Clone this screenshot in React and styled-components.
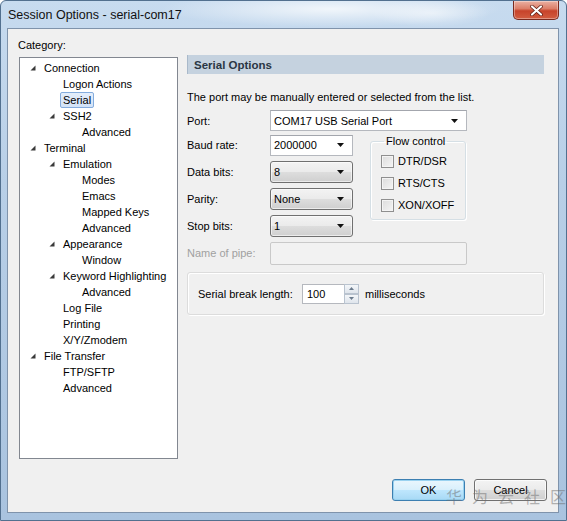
import React from "react";
import styled, { createGlobalStyle } from "styled-components";

const Global = createGlobalStyle`
  html, body { margin: 0; padding: 0; background: #ffffff; }
  body { font-family: "Liberation Sans", Arial, sans-serif; font-size: 11px; color: #000; }
  * { box-sizing: border-box; }
`;

const Window = styled.div`
  position: relative;
  width: 567px;
  height: 521px;
  display: flex;
  flex-direction: column;
  border: 1px solid #52708f;
  border-radius: 6px 6px 0 0;
  overflow: hidden;
  background:
    radial-gradient(ellipse 170px 18px at 330px 8px, rgba(255,255,255,0.75), rgba(255,255,255,0) 100%),
    radial-gradient(ellipse 60px 14px at 430px 12px, rgba(255,255,255,0.5), rgba(255,255,255,0) 100%),
    linear-gradient(to bottom, #c7dbef 0%, #b8cfe7 35%, #a9c3df 100%);
`;

const TitleBar = styled.div`
  height: 27px;
  display: flex;
  align-items: flex-start;
  justify-content: space-between;
  padding-left: 7px;
`;

const Title = styled.span`
  margin-top: 7px;
  font-family: "Liberation Sans", Arial, sans-serif;
  font-size: 12.5px;
  color: #111;
`;

const CloseButton = styled.div`
  width: 46px;
  height: 19px;
  margin-right: 7px;
  border: 1px solid #7a2a1e;
  border-top: none;
  border-radius: 0 0 5px 5px;
  background: linear-gradient(to bottom, #eab1a3 0%, #dc7f69 42%, #c7432a 55%, #d25d40 100%);
  box-shadow: inset 0 0 0 1px rgba(255,255,255,0.35);
  display: flex;
  align-items: center;
  justify-content: center;
`;

const Client = styled.div`
  flex: 1;
  margin: 0 7px 7px 6px;
  border: 1px solid #7f93ab;
  background: #f0f0f0;
  display: flex;
  flex-direction: column;
  padding: 9px 11px 11px 10px;
`;

const Body = styled.div`
  display: flex;
  gap: 9px;
`;

const LeftColumn = styled.div`
  width: 160px;
  display: flex;
  flex-direction: column;
`;

const CategoryLabel = styled.div`
  height: 14px;
  line-height: 14px;
  margin-bottom: 5px;
`;

const Tree = styled.div`
  margin-left: 1px;
  width: 159px;
  height: 402px;
  background: #fff;
  border: 1px solid #828790;
  padding-top: 2px;
  display: flex;
  flex-direction: column;
`;

const TreeRow = styled.div`
  height: 16px;
  display: flex;
  align-items: center;
  padding-left: ${(p) => p.$level * 19}px;
`;

const Toggle = styled.span`
  width: 24px;
  height: 16px;
  display: flex;
  align-items: center;
  padding-left: 10px;
  flex-shrink: 0;
`;

const TreeLabel = styled.span`
  margin-left: -3px;
  padding: 0 2px;
  height: 16px;
  line-height: 14px;
  border: 1px solid ${(p) => (p.$selected ? "#84acdd" : "transparent")};
  border-radius: 2px;
  background: ${(p) => (p.$selected ? "linear-gradient(to bottom, #e4eefb, #d3e3f7)" : "transparent")};
  white-space: nowrap;
`;

const RightColumn = styled.div`
  width: 357px;
  margin-top: 17px;
  display: flex;
  flex-direction: column;
`;

const Header = styled.div`
  height: 19px;
  background: #c5d2df;
  border-left: 1px solid #a9b9ca;
  padding-left: 6px;
  display: flex;
  align-items: center;
  font-size: 11.5px;
  font-weight: bold;
  color: #2a3644;
`;

const Description = styled.div`
  margin-top: 15px;
  height: 16px;
  line-height: 16px;
  margin-bottom: 5px;
`;

const FieldRow = styled.div`
  display: flex;
  align-items: center;
  height: ${(p) => p.$h || 22}px;
`;

const FieldLabel = styled.span`
  width: 83px;
  flex-shrink: 0;
  color: ${(p) => (p.$disabled ? "#a0a0a0" : "#000")};
`;

const EditCombo = styled.div`
  width: ${(p) => p.$w}px;
  height: 21px;
  background: #fff;
  border: 1px solid #b5b8be;
  border-top-color: #a3a6ad;
  display: flex;
  align-items: center;
  justify-content: space-between;
  padding: 0 8px 0 3px;
`;

const ButtonCombo = styled.div`
  width: ${(p) => p.$w}px;
  height: 22px;
  border: 1px solid #707070;
  border-radius: 3px;
  background: linear-gradient(to bottom, #f3f3f3 0%, #ebebeb 48%, #dddddd 52%, #cfcfcf 100%);
  box-shadow: inset 0 0 0 1px rgba(255,255,255,0.6);
  display: flex;
  align-items: center;
  justify-content: space-between;
  padding: 0 8px 0 3px;
`;

const Arrow = () => (
  <svg width="7" height="4" viewBox="0 0 7 4">
    <path d="M0 0 H7 L3.5 4 Z" fill="#111" />
  </svg>
);

const MiddleSection = styled.div`
  display: flex;
  margin-top: 3px;
  gap: 17px;
`;

const FieldStack = styled.div`
  display: flex;
  flex-direction: column;
  gap: 5px;
`;

const GroupBox = styled.fieldset`
  margin: 0;
  width: 96px;
  height: 86px;
  border: 1px solid #d5dfe5;
  border-radius: 3px;
  box-shadow: inset 1px 1px 0 #fff, 1px 1px 0 #fff;
  padding: 3px 0 0 10px;
  display: flex;
  flex-direction: column;
  gap: 2px;
`;

const Legend = styled.legend`
  padding: 0 2px;
  margin-left: 3px;
  line-height: 14px;
`;

const CheckRow = styled.label`
  display: flex;
  align-items: center;
  height: 20px;
  gap: 4px;
`;

const CheckBox = styled.span`
  width: 13px;
  height: 13px;
  border: 1px solid #8f8f8f;
  background: linear-gradient(135deg, #dcdcdc 0%, #f5f5f5 100%);
  box-shadow: inset 0 0 0 1px #f4f4f4;
`;

const DisabledInput = styled.div`
  width: 197px;
  height: 23px;
  border: 1px solid #c9c9c9;
  border-radius: 2px;
  background: #f2f2f2;
`;

const PipeRow = styled(FieldRow)`
  margin-top: 4px;
  height: 24px;
`;

const BreakBox = styled.div`
  margin-top: 7px;
  height: 43px;
  border: 1px solid #dcdcdc;
  border-radius: 3px;
  box-shadow: inset 1px 1px 0 #fff, 1px 1px 0 #fff;
  display: flex;
  align-items: center;
  padding-left: 10px;
`;

const BreakLabel = styled.span`
  width: 104px;
`;

const NumberInput = styled.div`
  width: 42px;
  height: 20px;
  background: #fff;
  border: 1px solid #b5b8be;
  border-right: none;
  padding-left: 4px;
  display: flex;
  align-items: center;
`;

const Spinner = styled.div`
  width: 15px;
  height: 20px;
  display: flex;
  flex-direction: column;
  margin-right: 6px;
`;

const SpinButton = styled.div`
  flex: 1;
  border: 1px solid #b9c3cf;
  background: linear-gradient(to bottom, #f3f6f9, #dfe5ec);
  display: flex;
  align-items: center;
  justify-content: center;
`;

const ButtonRow = styled.div`
  margin-top: auto;
  display: flex;
  justify-content: flex-end;
  gap: 9px;
`;

const DialogButton = styled.button`
  width: 73px;
  height: 22px;
  font-family: "Liberation Sans", Arial, sans-serif;
  font-size: 11px;
  color: #000;
  border-radius: 3px;
  border: 1px solid ${(p) => (p.$default ? "#3c7fb1" : "#707070")};
  background: ${(p) =>
    p.$default
      ? "linear-gradient(to bottom, #eaf6fd 0%, #d9f0fc 48%, #bee6fd 52%, #a7d9f5 100%)"
      : "linear-gradient(to bottom, #f3f3f3 0%, #ebebeb 48%, #dddddd 52%, #cfcfcf 100%)"};
  box-shadow: inset 0 0 0 1px ${(p) => (p.$default ? "#9ad2f0" : "rgba(255,255,255,0.7)")};
  padding: 0;
`;

const Watermark = styled.div`
  position: absolute;
  left: 445px;
  top: 485px;
  display: flex;
  gap: 10px;
  font-family: "Noto Sans CJK SC", sans-serif;
  font-size: 16px;
  line-height: 20px;
  color: rgba(110, 110, 110, 0.5);
  pointer-events: none;
`;

const TreeArrow = () => (
  <svg width="6" height="6" viewBox="0 0 6 6">
    <path d="M5.5 0.5 V5.5 H0.5 Z" fill="#3a3a3a" />
  </svg>
);

const treeItems = [
  { label: "Connection", level: 0, open: true },
  { label: "Logon Actions", level: 1 },
  { label: "Serial", level: 1, selected: true },
  { label: "SSH2", level: 1, open: true },
  { label: "Advanced", level: 2 },
  { label: "Terminal", level: 0, open: true },
  { label: "Emulation", level: 1, open: true },
  { label: "Modes", level: 2 },
  { label: "Emacs", level: 2 },
  { label: "Mapped Keys", level: 2 },
  { label: "Advanced", level: 2 },
  { label: "Appearance", level: 1, open: true },
  { label: "Window", level: 2 },
  { label: "Keyword Highlighting", level: 1, open: true },
  { label: "Advanced", level: 2 },
  { label: "Log File", level: 1 },
  { label: "Printing", level: 1 },
  { label: "X/Y/Zmodem", level: 1 },
  { label: "File Transfer", level: 0, open: true },
  { label: "FTP/SFTP", level: 1 },
  { label: "Advanced", level: 1 },
];

const comboRows = [
  { label: "Baud rate:", value: "2000000", edit: true },
  { label: "Data bits:", value: "8" },
  { label: "Parity:", value: "None" },
  { label: "Stop bits:", value: "1" },
];

export default function App() {
  return (
    <>
      <Global />
      <Window>
        <TitleBar>
          <Title>Session Options - serial-com17</Title>
          <CloseButton>
            <svg width="13" height="11" viewBox="0 0 13 11">
              <path d="M2 1.5 L11 9.5 M11 1.5 L2 9.5" stroke="#5a1a10" strokeWidth="3.6" strokeLinecap="round" />
              <path d="M2 1.5 L11 9.5 M11 1.5 L2 9.5" stroke="#ffffff" strokeWidth="2.2" strokeLinecap="round" />
            </svg>
          </CloseButton>
        </TitleBar>
        <Client>
          <Body>
            <LeftColumn>
              <CategoryLabel>Category:</CategoryLabel>
              <Tree>
                {treeItems.map((it, i) => (
                  <TreeRow key={i} $level={it.level}>
                    <Toggle>{it.open ? <TreeArrow /> : null}</Toggle>
                    <TreeLabel $selected={it.selected}>{it.label}</TreeLabel>
                  </TreeRow>
                ))}
              </Tree>
            </LeftColumn>
            <RightColumn>
              <Header>Serial Options</Header>
              <Description>The port may be manually entered or selected from the list.</Description>
              <FieldRow $h={21}>
                <FieldLabel>Port:</FieldLabel>
                <EditCombo $w={197}>
                  <span>COM17 USB Serial Port</span>
                  <Arrow />
                </EditCombo>
              </FieldRow>
              <MiddleSection>
                <FieldStack>
                  {comboRows.map((r) => (
                    <FieldRow key={r.label}>
                      <FieldLabel>{r.label}</FieldLabel>
                      {r.edit ? (
                        <EditCombo $w={83}>
                          <span>{r.value}</span>
                          <Arrow />
                        </EditCombo>
                      ) : (
                        <ButtonCombo $w={83}>
                          <span>{r.value}</span>
                          <Arrow />
                        </ButtonCombo>
                      )}
                    </FieldRow>
                  ))}
                </FieldStack>
                <GroupBox>
                  <Legend>Flow control</Legend>
                  {["DTR/DSR", "RTS/CTS", "XON/XOFF"].map((c) => (
                    <CheckRow key={c}>
                      <CheckBox />
                      <span>{c}</span>
                    </CheckRow>
                  ))}
                </GroupBox>
              </MiddleSection>
              <PipeRow>
                <FieldLabel $disabled>Name of pipe:</FieldLabel>
                <DisabledInput />
              </PipeRow>
              <BreakBox>
                <BreakLabel>Serial break length:</BreakLabel>
                <NumberInput>100</NumberInput>
                <Spinner>
                  <SpinButton>
                    <svg width="5" height="3" viewBox="0 0 5 3"><path d="M0 3 H5 L2.5 0 Z" fill="#6b7b8c" /></svg>
                  </SpinButton>
                  <SpinButton>
                    <svg width="5" height="3" viewBox="0 0 5 3"><path d="M0 0 H5 L2.5 3 Z" fill="#6b7b8c" /></svg>
                  </SpinButton>
                </Spinner>
                <span>milliseconds</span>
              </BreakBox>
            </RightColumn>
          </Body>
          <ButtonRow>
            <DialogButton $default>OK</DialogButton>
            <DialogButton>Cancel</DialogButton>
          </ButtonRow>
        </Client>
        <Watermark>
          <span>华</span><span>为</span><span>云</span><span>社</span><span>区</span>
        </Watermark>
      </Window>
    </>
  );
}
